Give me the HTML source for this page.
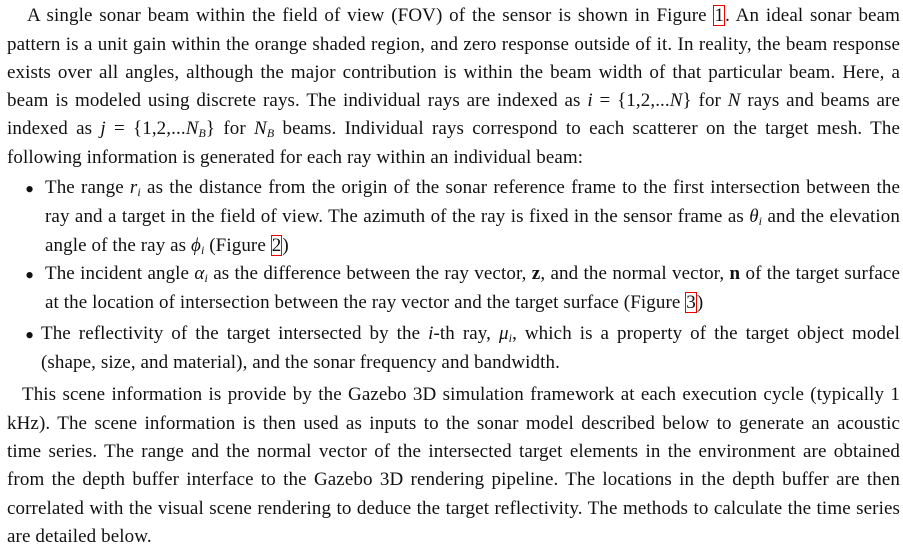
<!DOCTYPE html>
<html><head><meta charset="utf-8"><style>
html,body{margin:0;padding:0;background:#fff;width:903px;height:548px;overflow:hidden}
body{position:relative;font-family:"Liberation Serif","DejaVu Serif",serif;font-size:19px;letter-spacing:0.1px;color:#111}
.l{position:absolute;left:7px;width:893px;height:28px;line-height:28px;white-space:nowrap;text-align:justify;text-align-last:justify;margin-top:1px}
.n{text-align-last:left}
i{font-style:italic}
.r{outline:1.5px solid #e00;outline-offset:-1px;padding:0 1px}
b{font-weight:bold}
sub{font-size:12px;vertical-align:-3px;line-height:0}
.dot{position:absolute;left:25px;font-size:26px;line-height:28px;margin-top:1px}
</style></head><body>
<div class="l" style="top:1px;left:27px;width:873px">A single sonar beam within the field of view (FOV) of the sensor is shown in Figure <span class="r">1</span>. An ideal sonar beam</div>
<div class="l" style="top:30px">pattern is a unit gain within the orange shaded region, and zero response outside of it. In reality, the beam response</div>
<div class="l" style="top:58px">exists over all angles, although the major contribution is within the beam width of that particular beam. Here, a</div>
<div class="l" style="top:86px">beam is modeled using discrete rays. The individual rays are indexed as <i>i</i> = {1,2,...<i>N</i>} for <i>N</i> rays and beams are</div>
<div class="l" style="top:114px">indexed as <i>j</i> = {1,2,...<i>N<sub>B</sub></i>} for <i>N<sub>B</sub></i> beams. Individual rays correspond to each scatterer on the target mesh. The</div>
<div class="l n" style="top:143px">following information is generated for each ray within an individual beam:</div>

<div class="dot" style="top:175px">•</div>
<div class="l" style="top:173px;left:45px;width:855px">The range <i>r<sub>i</sub></i> as the distance from the origin of the sonar reference frame to the first intersection between the</div>
<div class="l" style="top:202px;left:45px;width:855px">ray and a target in the field of view. The azimuth of the ray is fixed in the sensor frame as <i>θ<sub>i</sub></i> and the elevation</div>
<div class="l n" style="top:231px;left:45px;width:855px">angle of the ray as <i>ϕ<sub>i</sub></i> (Figure <span class="r">2</span>)</div>

<div class="dot" style="top:261px">•</div>
<div class="l" style="top:259px;left:45px;width:855px">The incident angle <i>α<sub>i</sub></i> as the difference between the ray vector, <b>z</b>, and the normal vector, <b>n</b> of the target surface</div>
<div class="l n" style="top:288px;left:45px;width:855px">at the location of intersection between the ray vector and the target surface (Figure <span class="r">3</span>)</div>

<div class="dot" style="top:321px">•</div>
<div class="l" style="top:319px;left:41px;width:859px">The reflectivity of the target intersected by the <i>i</i>-th ray, <i>μ<sub>i</sub></i>, which is a property of the target object model</div>
<div class="l n" style="top:348px;left:41px;width:859px">(shape, size, and material), and the sonar frequency and bandwidth.</div>

<div class="l" style="top:380px;left:22px;width:878px">This scene information is provide by the Gazebo 3D simulation framework at each execution cycle (typically 1</div>
<div class="l" style="top:409px">kHz). The scene information is then used as inputs to the sonar model described below to generate an acoustic</div>
<div class="l" style="top:437px">time series. The range and the normal vector of the intersected target elements in the environment are obtained</div>
<div class="l" style="top:465px">from the depth buffer interface to the Gazebo 3D rendering pipeline. The locations in the depth buffer are then</div>
<div class="l" style="top:494px">correlated with the visual scene rendering to deduce the target reflectivity. The methods to calculate the time series</div>
<div class="l n" style="top:522px">are detailed below.</div>
</body></html>
